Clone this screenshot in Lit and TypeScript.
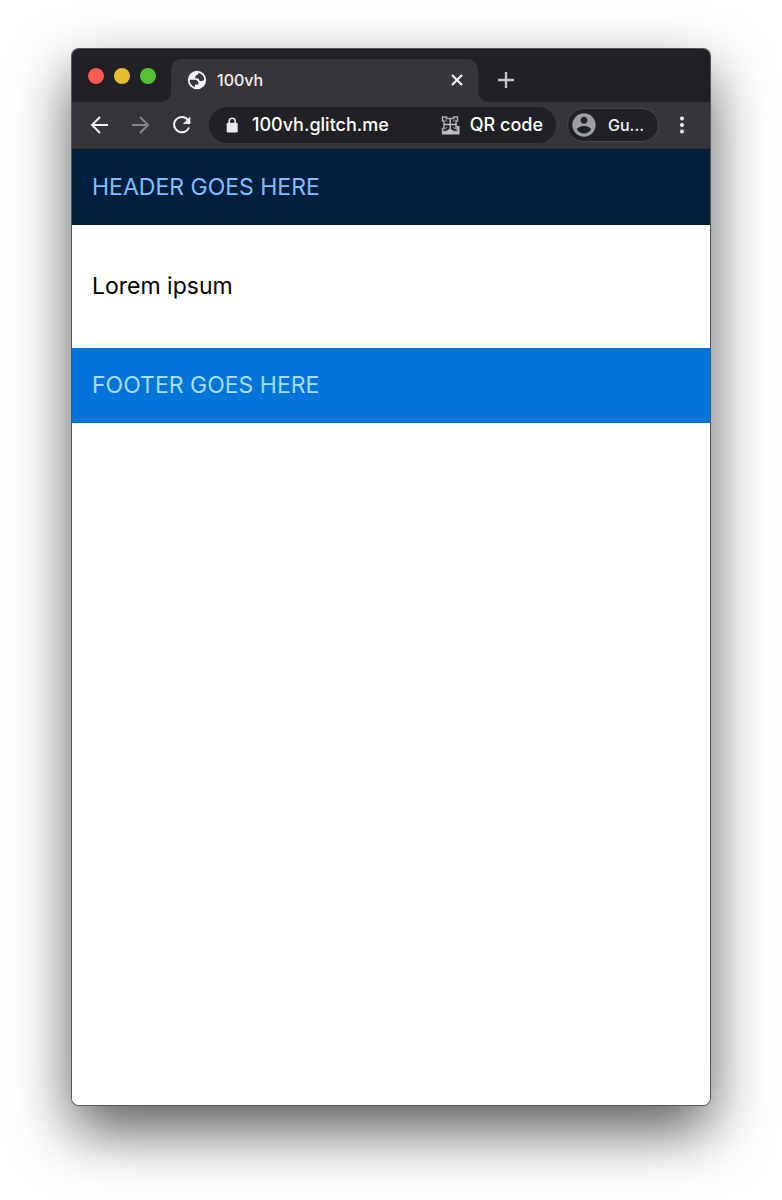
import { LitElement, html, css } from "lit";
import { customElement, property } from "lit/decorators.js";

@customElement("browser-tabs")
class BrowserTabs extends LitElement {
  @property() label = "";

  static styles = css`
    :host {
      display: flex;
      height: 53px;
      background: #35363a;
      color: #f1f3f4;
    }
    .lights {
      flex: none;
      box-sizing: border-box;
      width: 99px;
      padding: 19px 0 0 16px;
      display: flex;
      gap: 10px;
      background: #202124;
      border-bottom-right-radius: 10px;
    }
    button {
      display: block;
      border: 0;
      padding: 0;
      background: none;
      color: inherit;
      font: inherit;
    }
    .light {
      width: 16px;
      height: 16px;
      border-radius: 50%;
    }
    .close { background: #fc5b53; }
    .minimise { background: #e5bf2c; }
    .zoom { background: #57c032; }
    .slot {
      flex: 0 1 307px;
      min-width: 0;
      padding-top: 10px;
      background: #202124;
    }
    .tab {
      height: 43px;
      box-sizing: border-box;
      padding: 0 12px 2px 15px;
      display: flex;
      align-items: center;
      gap: 9px;
      background: #35363a;
      border-radius: 10px 10px 0 0;
    }
    .title {
      flex: 1;
      font-size: 16px;
      line-height: 20px;
    }
    .rest {
      flex: 1;
      box-sizing: border-box;
      padding: 21px 0 0 18px;
      background: #202124;
      border-bottom-left-radius: 10px;
    }
    svg { display: block; }
  `;

  render() {
    return html`
      <div class="lights">
        <button class="light close" aria-label="Close window"></button>
        <button class="light minimise" aria-label="Minimise window"></button>
        <button class="light zoom" aria-label="Zoom window"></button>
      </div>
      <div class="slot">
        <div class="tab">
          <svg width="22" height="22" viewBox="0 0 24 24" aria-hidden="true">
            <circle cx="12" cy="12" r="10" fill="#f1f3f4"></circle>
            <path d="M4.100 11.800h4.800c3.400 0 5 1.700 4.600 5.200H9.900v2.700A8 8 0 0 1 4.100 11.800z" fill="#35363a"></path>
            <path d="M14 4.300c3.500.900 6 4 5.900 7.500-.7.800-1.600 1.300-2.800 1.300-2.200 0-3.200-1-3.200-2.800h-3.800c-.2-2.700.7-4 2.900-4.100 0-.9.300-1.500 1-1.900z" fill="#35363a"></path>
          </svg>
          <span class="title">${this.label}</span>
          <button aria-label="Close tab">
            <svg width="18" height="18" viewBox="0 0 18 18" fill="none" stroke="currentColor" stroke-width="2.200">
              <path d="M4 4l10 10M14 4L4 14"></path>
            </svg>
          </button>
        </div>
      </div>
      <div class="rest">
        <button aria-label="New tab">
          <svg width="20" height="20" viewBox="0 0 20 20" fill="none" stroke="#c4c6c9" stroke-width="2.300">
            <path d="M10 2v16M2 10h16"></path>
          </svg>
        </button>
      </div>
    `;
  }
}

@customElement("browser-toolbar")
class BrowserToolbar extends LitElement {
  @property() address = "";

  static styles = css`
    :host {
      display: flex;
      align-items: center;
      box-sizing: border-box;
      height: 47px;
      padding: 0 16px;
      background: #35363a;
      border-bottom: 1px solid #2c3032;
      color: #f1f3f4;
    }
    button {
      display: flex;
      align-items: center;
      border: 0;
      padding: 0;
      background: none;
      color: inherit;
      font: inherit;
    }
    .nav {
      display: flex;
      gap: 17px;
      padding-right: 15px;
    }
    .dim { color: #85868a; }
    .omnibox {
      flex: 1;
      min-width: 0;
      box-sizing: border-box;
      height: 36px;
      padding: 0 13px 0 15px;
      display: flex;
      align-items: center;
      gap: 12px;
      background: #202124;
      border-radius: 18px;
    }
    input {
      flex: 1;
      min-width: 0;
      border: 0;
      padding: 0;
      outline: 0;
      background: none;
      color: #fff;
      font: inherit;
      font-size: 18px;
      line-height: 24px;
    }
    .qr {
      gap: 10px;
      color: #fff;
      font-size: 18px;
      line-height: 24px;
    }
    .profile {
      flex: none;
      box-sizing: border-box;
      width: 92px;
      height: 34px;
      margin: 0 11px;
      padding: 0 0 0 2px;
      gap: 10px;
      background: #202124;
      border: 1px solid #46474b;
      border-radius: 17px;
      font-size: 16px;
      line-height: 24px;
    }
    svg { display: block; flex: none; }
  `;

  render() {
    return html`
      <div class="nav">
        <button aria-label="Back">
          <svg width="24" height="24" viewBox="0 0 24 24" fill="none" stroke="currentColor" stroke-width="2">
            <path d="M20 12H5M12 4l-8 8 8 8"></path>
          </svg>
        </button>
        <button class="dim" aria-label="Forward">
          <svg width="24" height="24" viewBox="0 0 24 24" fill="none" stroke="currentColor" stroke-width="2">
            <path d="M3 12h15M11 4l8 8-8 8"></path>
          </svg>
        </button>
        <button aria-label="Reload">
          <svg width="24" height="24" viewBox="0 0 24 24" aria-hidden="true">
            <path d="M18 7A7.700 7.700 0 1 0 19 14.500" fill="none" stroke="currentColor" stroke-width="2"></path>
            <path d="M20.300 3.500v7.500H12.800z" fill="currentColor"></path>
          </svg>
        </button>
      </div>
      <div class="omnibox">
        <svg width="16" height="18" viewBox="0 0 16 18" aria-hidden="true">
          <path d="M5.200 8V5.200a3 3 0 0 1 6 0V8" fill="none" stroke="#e8eaed" stroke-width="1.600"></path>
          <rect x="2.700" y="6.700" width="11" height="9.800" rx="1.300" fill="#e8eaed"></rect>
        </svg>
        <input aria-label="Address" .value=${this.address} />
        <button class="qr">
          <svg width="20" height="20" viewBox="0 0 20 20" aria-hidden="true">
            <path d="M2 14.500h17.500V19.500H2zM16.500 11h3v5h-3z" fill="#bfc0c2"></path>
            <path d="M2.500 2h4v1.500h7V2h4v4H16v7.500h1.500v3h-4l-3.500-2-3.500 2h-4v-3H4V6H2.500z" fill="#202124" stroke="#a9aaad" stroke-width="1.500"></path>
            <path d="M10.200 4v11M4 9.500h13" fill="none" stroke="#bfc0c2" stroke-width="1.400"></path>
            <path d="M5 4.500l2.200 2.200M15 4.500l-2.200 2.200M5 14l2.200-2.200M15 14l-2.200-2.200" stroke="#77787b" stroke-width="1.200"></path>
            <path d="M6 17.500l4-4 4 4z" fill="#bfc0c2"></path>
          </svg>
          QR code
        </button>
      </div>
      <button class="profile">
        <svg width="28" height="28" viewBox="0 0 24 24" fill="#9aa0a6" aria-hidden="true">
          <path d="M12 2C6.480 2 2 6.480 2 12s4.480 10 10 10 10-4.480 10-10S17.520 2 12 2zm0 3c1.660 0 3 1.340 3 3s-1.340 3-3 3-3-1.340-3-3 1.340-3 3-3zm0 14.200c-2.500 0-4.710-1.280-6-3.220.03-1.990 4-3.080 6-3.080 1.990 0 5.970 1.090 6 3.080-1.290 1.940-3.500 3.220-6 3.220z"></path>
        </svg>
        Gu...
      </button>
      <button aria-label="Menu">
        <svg width="24" height="24" viewBox="0 0 24 24" fill="currentColor">
          <circle cx="12" cy="5.500" r="2"></circle>
          <circle cx="12" cy="12" r="2"></circle>
          <circle cx="12" cy="18.500" r="2"></circle>
        </svg>
      </button>
    `;
  }
}

@customElement("app-root")
class AppRoot extends LitElement {
  static styles = css`
    :host {
      display: flex;
      box-sizing: border-box;
      min-height: 100vh;
      padding: 49px 72px 95px;
      background: #fff;
      font-family: Inter, "Liberation Sans", sans-serif;
      overflow: hidden;
    }
    .window {
      flex: 1;
      min-width: 0;
      display: flex;
      flex-direction: column;
      border-radius: 7px;
      box-shadow: 0 0 0 1px #55575a, 0 25px 60px rgba(0, 0, 0, 0.66);
    }
    .chrome {
      overflow: hidden;
      border-radius: 7px 7px 0 0;
      font-weight: 500;
    }
    .page {
      flex: 1;
      background: #fff;
      border-radius: 0 0 7px 7px;
      font-size: 23px;
      line-height: 35px;
    }
    header,
    footer {
      padding: 20px;
    }
    header {
      background: #001f3f;
      border-top: 1px solid #001a33;
      color: #80bfff;
    }
    main {
      padding: 20px;
      color: #000;
    }
    p { margin: 24px 0; }
    footer {
      background: #0074d9;
      color: #a8ddff;
    }
  `;

  render() {
    return html`
      <div class="window">
        <div class="chrome">
          <browser-tabs label="100vh"></browser-tabs>
          <browser-toolbar address="100vh.glitch.me"></browser-toolbar>
        </div>
        <div class="page">
          <header>HEADER GOES HERE</header>
          <main><p>Lorem ipsum</p></main>
          <footer>FOOTER GOES HERE</footer>
        </div>
      </div>
    `;
  }
}
